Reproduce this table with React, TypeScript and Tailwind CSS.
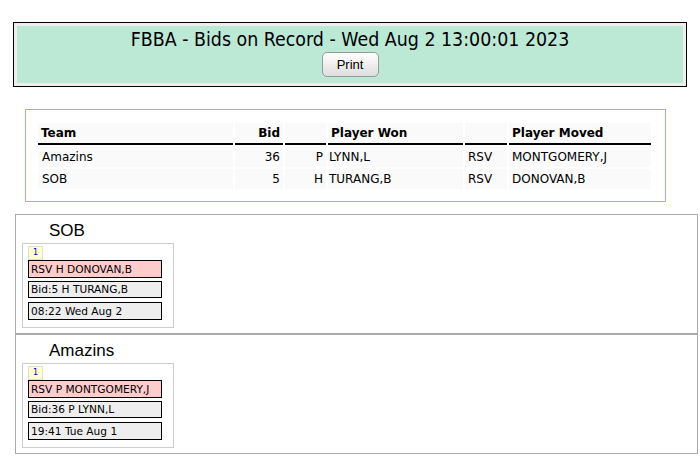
const bids = [
  { team: "Amazins", bid: 36, pos: "P", won: "LYNN,L", act: "RSV", moved: "MONTGOMERY,J" },
  { team: "SOB", bid: 5, pos: "H", won: "TURANG,B", act: "RSV", moved: "DONOVAN,B" },
];

const teams = [
  { name: "SOB", moved: "RSV H DONOVAN,B", bid: "Bid:5 H TURANG,B", when: "08:22 Wed Aug 2" },
  { name: "Amazins", moved: "RSV P MONTGOMERY,J", bid: "Bid:36 P LYNN,L", when: "19:41 Tue Aug 1" },
];

export default function App() {
  return (
    <div className="min-h-screen bg-white pt-[22px] pb-2 text-black [font-family:'DejaVu_Sans',Verdana,sans-serif]">
      <div className="ml-[13px] w-[674px] border border-black bg-[#eeeeee] p-[3px]">
        <div className="flex h-[57px] flex-col items-center bg-[#bce9d6] pt-[2px]">
          <p className="text-[19.4px] leading-[23px] [font-family:'DejaVu_Sans_Condensed','DejaVu_Sans',sans-serif]">
            FBBA - Bids on Record - Wed Aug 2 13:00:01 2023
          </p>
          <button className="mt-[1px] h-[25px] w-[57px] rounded-[5px] border border-[#9a9a9a] bg-gradient-to-b from-white to-[#dedede] text-[13px] [font-family:'Liberation_Sans',Arial,sans-serif]">
            Print
          </button>
        </div>
      </div>

      {/* bids table, lavender frame */}
      <div className="mt-[22px] ml-[25px] w-[641px] bg-[#a6a6ff] p-px">
        <div className="bg-white px-[12px] pt-[13px] pb-[12px]">
          <table className="border-separate border-spacing-[2px] -m-[2px] text-[12px]">
            <thead>
              <tr className="bg-[#fafafa] font-bold">
                <th className="w-[195px] border-b-2 border-black px-[3px] h-[22px] text-left">Team</th>
                <th className="w-[48px] border-b-2 border-black px-[3px] text-right">Bid</th>
                <th className="w-[41px] border-b-2 border-black px-[3px]"></th>
                <th className="w-[135px] border-b-2 border-black px-[3px] text-left">Player Won</th>
                <th className="w-[42px] border-b-2 border-black px-[3px]"></th>
                <th className="w-[142px] border-b-2 border-black px-[3px] text-left">Player Moved</th>
              </tr>
            </thead>
            <tbody>
              {bids.map((b) => (
                <tr key={b.team} className="h-[20px] bg-[#fafafa]">
                  <td className="px-[4px]">{b.team}</td>
                  <td className="px-[3px] text-right">{b.bid}</td>
                  <td className="px-[3px] text-right">{b.pos}</td>
                  <td className="px-[1px]">{b.won}</td>
                  <td className="px-[3px]">{b.act}</td>
                  <td className="px-[3px]">{b.moved}</td>
                </tr>
              ))}
            </tbody>
          </table>
        </div>
      </div>

      <div className="mt-[12px] ml-[15px] w-[683px]">
        {teams.map((t) => (
          <div key={t.name} className="h-[120px] border border-[#aaaaaa] px-[6px] pt-[6px]">
            <p className="ml-[27px] text-[17px] leading-[20px] [font-family:'Liberation_Sans',Arial,sans-serif]">
              {t.name}
            </p>
            <div className="mt-[2px] h-[85px] w-[152px] border border-[#cccccc] pl-[5px] pt-[2px] text-[10.6px]">
              <div className="flex h-[14px] w-[15px] items-center justify-center border border-[#dddddd] bg-[#ffffcc] text-[8px] text-[#0000cc]">
                1
              </div>
              <div className="h-[18px] w-[134px] border border-black bg-[#ffcccc] pl-[2px] leading-[16px]">
                {t.moved}
              </div>
              <div className="mt-[3px] h-[17px] w-[134px] border border-black bg-[#eeeeee] pl-[2px] leading-[15px]">
                {t.bid}
              </div>
              <div className="mt-[4px] h-[18px] w-[134px] border border-black bg-[#eeeeee] pl-[2px] leading-[16px]">
                {t.when}
              </div>
            </div>
          </div>
        ))}
      </div>
    </div>
  );
}
